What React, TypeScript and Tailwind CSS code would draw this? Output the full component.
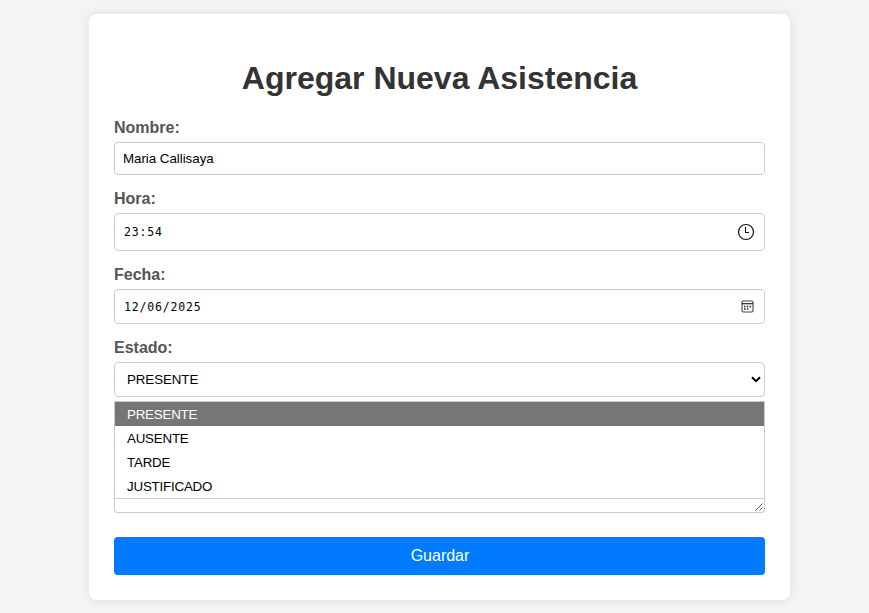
import React from "react";

const options = ["PRESENTE", "AUSENTE", "TARDE", "JUSTIFICADO"];

function Label({ children }: { children: React.ReactNode }) {
  return <label className="block h-[18px] text-[16px] leading-[18px] font-bold text-[#555]">{children}</label>;
}

function ClockIcon() {
  return (
    <svg width="18" height="18" viewBox="0 0 18 18" fill="none" stroke="#111" strokeWidth="1.2">
      <circle cx="9" cy="9" r="7.5" />
      <path d="M8.5 4v5.5H12" strokeWidth="1.1" />
    </svg>
  );
}

function CalendarIcon() {
  return (
    <svg width="13" height="13" viewBox="0 0 13 13" fill="none">
      <rect x="1" y="1" width="11" height="11" rx="1.5" stroke="#444" strokeWidth="1.1" />
      <path d="M1 3.7h11" stroke="#222" strokeWidth="1.2" />
      <path d="M3 6.5h1.5M5.8 6.5h1.5M8.6 6.5h1.5M3 9h1.5M5.8 9h1.5" stroke="#222" strokeWidth="1.3" />
    </svg>
  );
}

export default function App() {
  return (
    <main className="flex h-[613px] w-[869px] items-start overflow-hidden bg-[#f4f4f4] pt-[14px] pl-[89px] font-['Liberation_Sans',Arial,sans-serif]">
      <form className="flex h-[586px] w-[701px] flex-col rounded-[8px] bg-white px-[25px] pt-[45px] shadow-[0_0_10px_rgba(0,0,0,0.1)]">
        <h1 className="h-[38px] text-center text-[32px] leading-[38px] font-bold whitespace-nowrap text-[#333]">
          Agregar Nueva Asistencia
        </h1>

        <div className="mt-[22px]">
          <Label>Nombre:</Label>
          <div className="mt-[5px] flex h-[33px] items-center rounded-[4px] border border-[#ccc] pl-[8px] text-[13.333px] tracking-[-0.03px] text-black">
            <span>Maria Callisaya</span>
          </div>
        </div>

        <div className="mt-[15px]">
          <Label>Hora:</Label>
          <div className="mt-[5px] flex h-[38px] items-center justify-between rounded-[4px] border border-[#ccc] pr-[9px] pl-[9px] font-['DejaVu_Sans_Mono',monospace] text-[11.5px] leading-[16px] tracking-[0.82px] text-black">
            <span>23:54</span>
            <ClockIcon />
          </div>
        </div>

        <div className="mt-[15px]">
          <Label>Fecha:</Label>
          <div className="mt-[5px] flex h-[35px] items-center justify-between rounded-[4px] border border-[#ccc] pr-[10px] pl-[9px] font-['DejaVu_Sans_Mono',monospace] text-[11.5px] leading-[16px] tracking-[0.82px] text-black">
            <span className="pt-px">12/06/2025</span>
            <CalendarIcon />
          </div>
        </div>

        <div className="mt-[15px]">
          <Label>Estado:</Label>
          <div className="mt-[5px] flex h-[35px] items-center justify-between rounded-[4px] border border-[#ccc] pr-[3px] pl-[12px] text-[13.333px] tracking-[-0.08px] text-black">
            <span>PRESENTE</span>
            <svg width="10" height="7" viewBox="0 0 10 7" fill="none" stroke="#000" strokeWidth="2">
              <path d="M1 1.2l4 4 4-4" />
            </svg>
          </div>
        </div>

        <ul className="mt-[4px] h-[98px] border border-[#ccc] text-[13.333px] tracking-[-0.2px] text-black">
          {options.map((option, index) => (
            <li
              key={option}
              className={`h-[24px] pl-[12px] leading-[25px] ${index === 0 ? "bg-[#767676] text-white" : "bg-white"}`}
            >
              {option}
            </li>
          ))}
        </ul>
        <div className="flex h-[14px] items-end justify-end rounded-b-[4px] border border-t-0 border-[#ccc] pr-px pb-px">
          <svg width="8" height="8" viewBox="0 0 8 8" stroke="#555" strokeWidth="1">
            <path d="M0.5 7.5l7-7M4.5 7.5l3-3" />
          </svg>
        </div>

        <button type="button" className="mt-[24px] h-[38px] rounded-[4px] bg-[#007bff] pl-px text-[16px] leading-[38px] text-white">
          Guardar
        </button>
      </form>
    </main>
  );
}
